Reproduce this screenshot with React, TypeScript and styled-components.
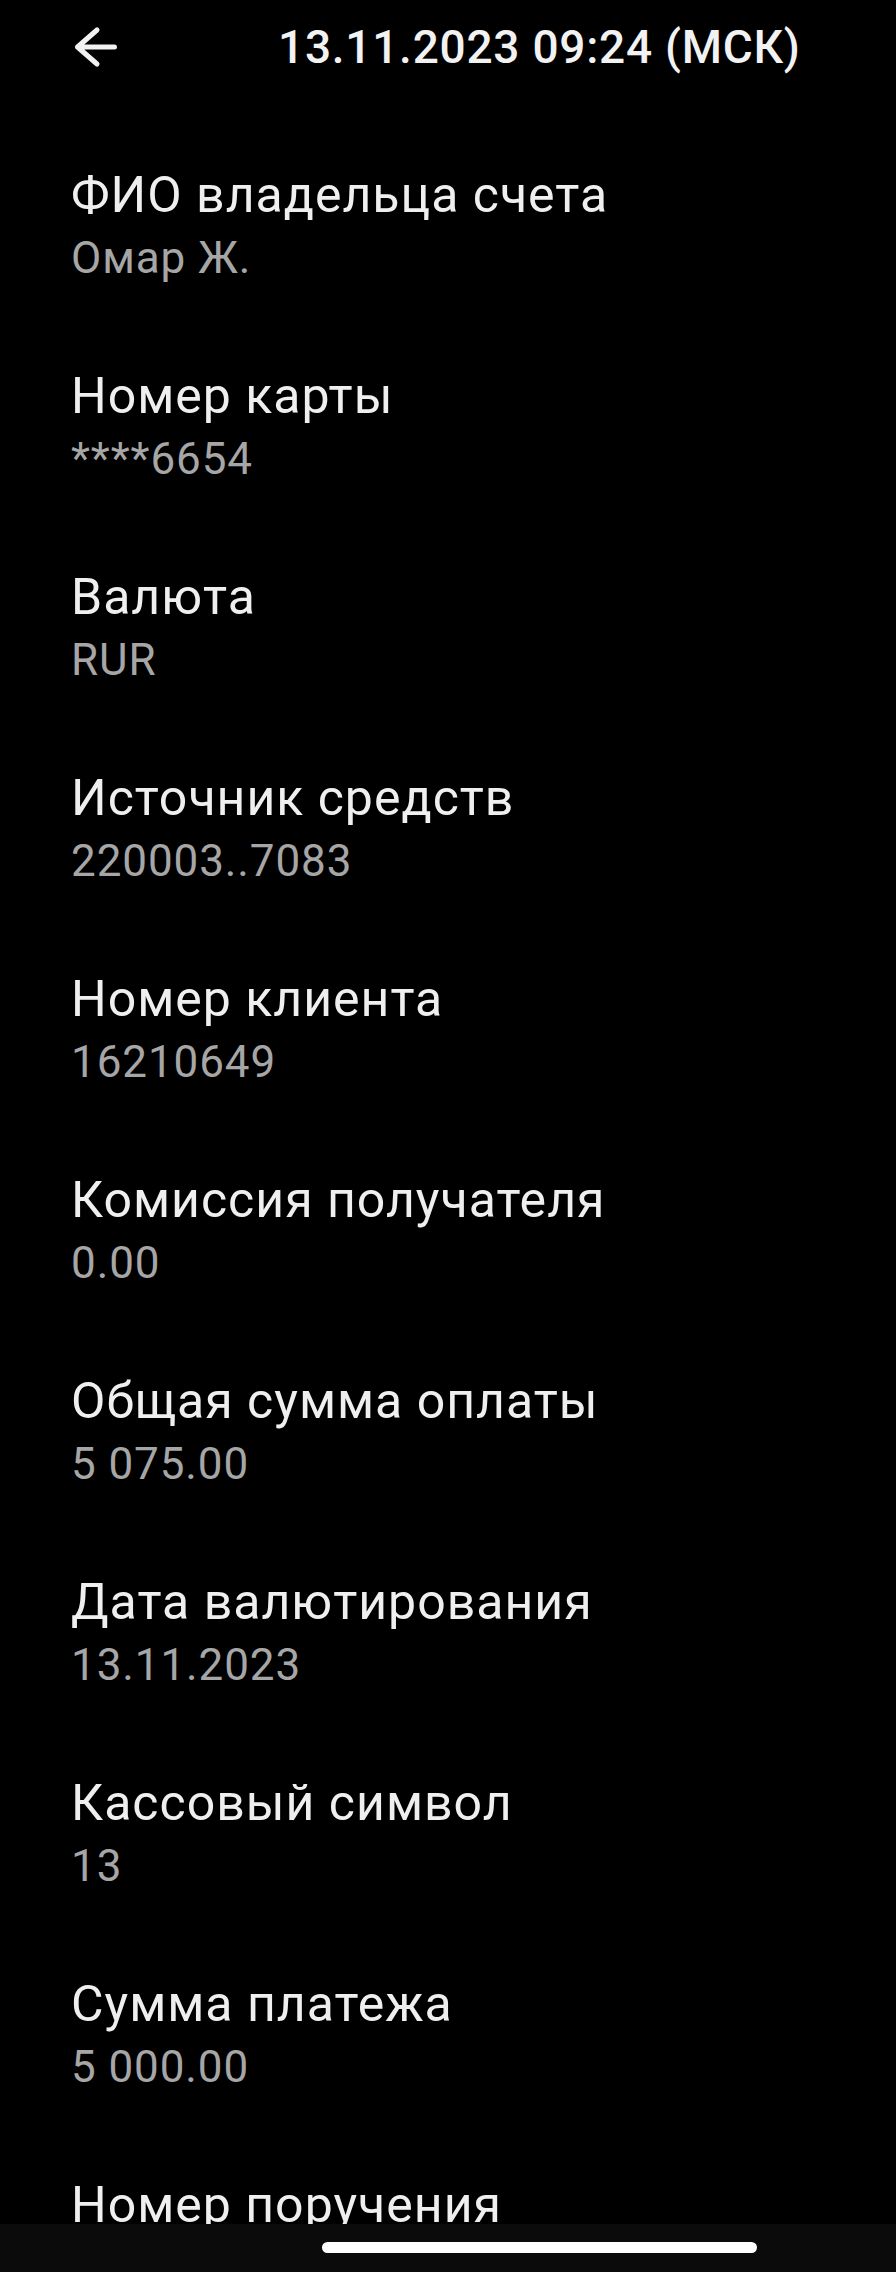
import React from "react";
import styled, { createGlobalStyle } from "styled-components";

const GlobalStyle = createGlobalStyle`
  html, body {
    margin: 0;
    padding: 0;
    background: #000;
    overflow: hidden;
  }
  body {
    font-family: Roboto, "Noto Sans", "Liberation Sans", sans-serif;
  }
`;

const Screen = styled.div`
  position: relative;
  width: 100%;
  height: 2272px;
  background: #000;
  overflow: hidden;
`;

const Toolbar = styled.div`
  display: flex;
  align-items: center;
  height: 94px;
  padding-left: 72px;
`;

const BackButton = styled.button`
  display: flex;
  align-items: center;
  justify-content: center;
  padding: 0;
  border: none;
  background: transparent;
  cursor: pointer;
`;

// заголовок стоит по центру экрана телефона (1080px), а не окна
const Title = styled.div`
  margin-left: 158px;
  color: #f2f2f2;
  font-size: 46px;
  font-weight: 500;
  letter-spacing: 0.75px;
  white-space: nowrap;
`;

const List = styled.div`
  display: flex;
  flex-direction: column;
  padding: 69px 0 0 71px;
`;

const Row = styled.div`
  display: flex;
  flex-direction: column;
  padding-bottom: 75px;
`;

const Label = styled.div`
  color: #efefef;
  font-size: 50px;
  line-height: 64px;
  letter-spacing: 1px;
  white-space: nowrap;
`;

const Value = styled.div`
  color: #a6a6a6;
  font-size: 44px;
  line-height: 62px;
  letter-spacing: 0.9px;
  white-space: nowrap;
`;

const NavBar = styled.div`
  position: absolute;
  left: 0;
  right: 0;
  bottom: 0;
  height: 48px;
  display: flex;
  padding: 18px 0 0 322px;
  box-sizing: border-box;
  background: #0b0b0b;
`;

const Handle = styled.div`
  width: 435px;
  height: 11px;
  border-radius: 6px;
  background: #fff;
`;

type Field = {
  label: string;
  value?: string;
};

const fields: Field[] = [
  { label: "ФИО владельца счета", value: "Омар Ж." },
  { label: "Номер карты", value: "****6654" },
  { label: "Валюта", value: "RUR" },
  { label: "Источник средств", value: "220003..7083" },
  { label: "Номер клиента", value: "16210649" },
  { label: "Комиссия получателя", value: "0.00" },
  { label: "Общая сумма оплаты", value: "5 075.00" },
  { label: "Дата валютирования", value: "13.11.2023" },
  { label: "Кассовый символ", value: "13" },
  { label: "Сумма платежа", value: "5 000.00" },
  { label: "Номер поручения" },
];

const BackArrow = () => (
  <svg width="48" height="42" viewBox="0 0 48 42" fill="none">
    <path
      d="M42.5 21H5.5M25 4L5.5 21L25 38"
      stroke="#f2f2f2"
      strokeWidth="5"
      strokeLinecap="round"
      strokeLinejoin="round"
    />
  </svg>
);

const App = () => {
  return (
    <>
      <GlobalStyle />
      <Screen>
        <Toolbar>
          <BackButton aria-label="Назад">
            <BackArrow />
          </BackButton>
          <Title>13.11.2023 09:24 (МСК)</Title>
        </Toolbar>
        <List>
          {fields.map((f) => (
            <Row key={f.label}>
              <Label>{f.label}</Label>
              {f.value && <Value>{f.value}</Value>}
            </Row>
          ))}
        </List>
        <NavBar>
          <Handle />
        </NavBar>
      </Screen>
    </>
  );
};

export default App;
